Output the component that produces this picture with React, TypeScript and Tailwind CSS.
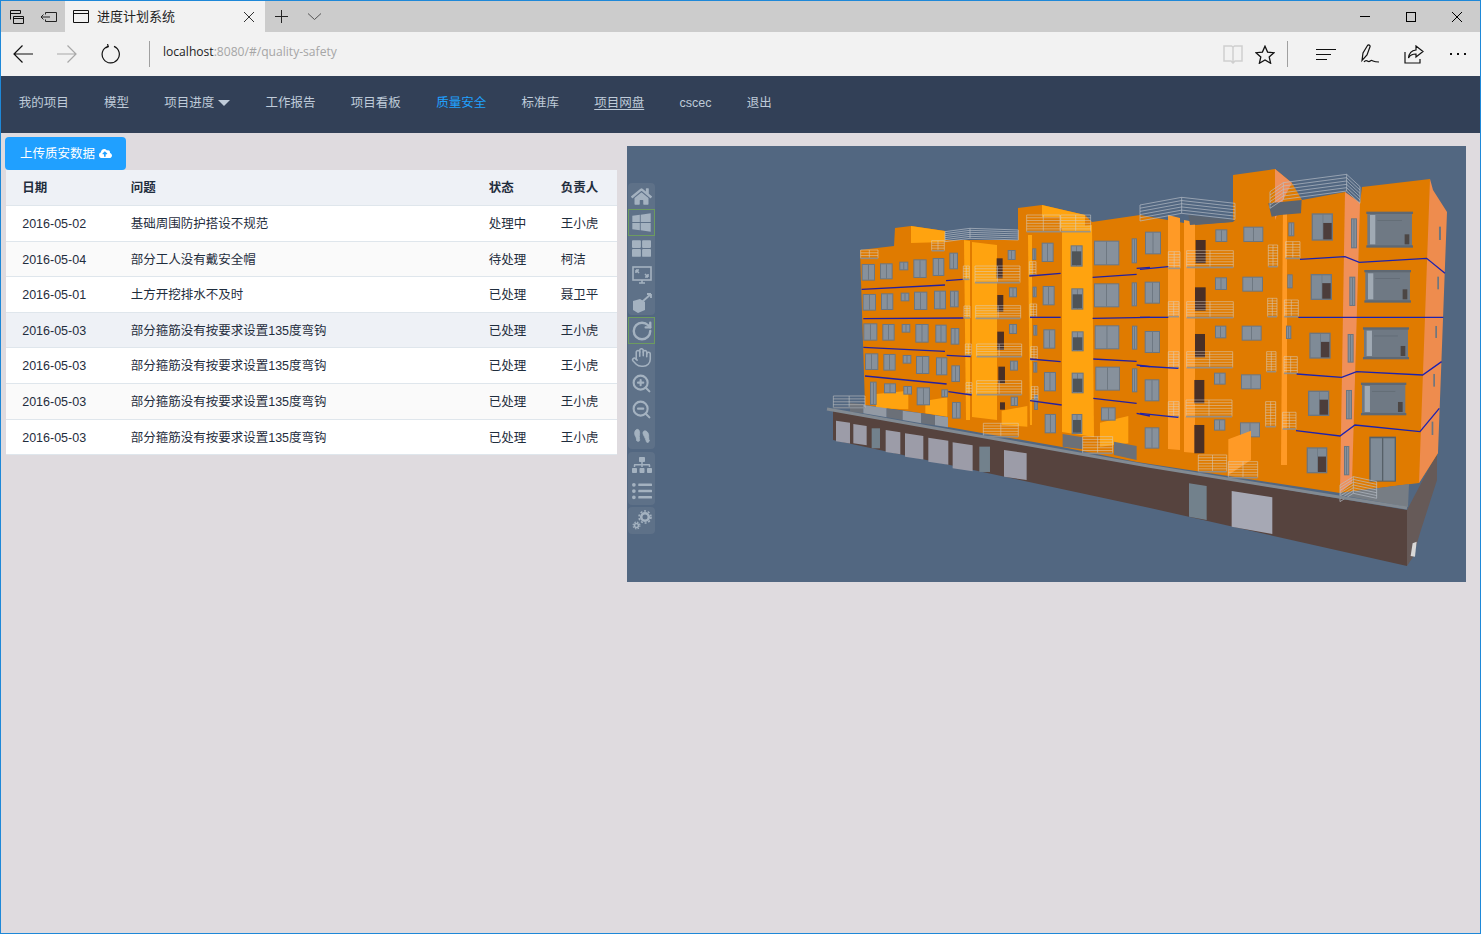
import type { ReactNode } from 'react';
import { Hand, RotateCw, ZoomIn, ZoomOut, Footprints } from 'lucide-react';
import { FaCloudUploadAlt, FaHome, FaListUl, FaSitemap, FaThLarge, FaWindows } from 'react-icons/fa';

type Box = [number, number, number, number];

const rows = [
  ['2016-05-02', '基础周围防护搭设不规范', '处理中', '王小虎', 'bg-white'],
  ['2016-05-04', '部分工人没有戴安全帽', '待处理', '柯洁', 'bg-[#fafafa]'],
  ['2016-05-01', '土方开挖排水不及时', '已处理', '聂卫平', 'bg-white'],
  ['2016-05-03', '部分箍筋没有按要求设置135度弯钩', '已处理', '王小虎', 'bg-[#eef1f6]'],
  ['2016-05-03', '部分箍筋没有按要求设置135度弯钩', '已处理', '王小虎', 'bg-white'],
  ['2016-05-03', '部分箍筋没有按要求设置135度弯钩', '已处理', '王小虎', 'bg-[#fafafa]'],
  ['2016-05-03', '部分箍筋没有按要求设置135度弯钩', '已处理', '王小虎', 'bg-white'],
];

// coordinates below are read off the two zoomed crops (3x), hence the group transforms
const leftWindows: Box[] = [
  [125, 312, 40, 50], [180, 310, 38, 48], [238, 305, 27, 26], [280, 298, 40, 56], [338, 294, 35, 54], [388, 278, 26, 50],
  [128, 402, 40, 50], [183, 400, 37, 50], [242, 398, 26, 26], [282, 395, 40, 55], [342, 392, 36, 56], [390, 392, 26, 50],
  [130, 490, 42, 52], [187, 492, 37, 50], [245, 492, 26, 26], [286, 492, 40, 56], [346, 494, 34, 54], [392, 504, 26, 50],
  [135, 580, 40, 50], [190, 582, 37, 50], [248, 585, 26, 26], [288, 588, 40, 54], [348, 592, 34, 54], [394, 616, 26, 50],
  [150, 665, 20, 70], [192, 670, 36, 30], [250, 678, 26, 26], [290, 682, 40, 54], [364, 688, 20, 24], [396, 726, 26, 50],
  [563, 270, 24, 30], [567, 382, 24, 30], [567, 492, 24, 30], [570, 602, 24, 30], [572, 710, 22, 28],
  [637, 265, 12, 35], [638, 380, 12, 32], [640, 495, 12, 32], [640, 606, 12, 32], [642, 705, 12, 45],
  [665, 248, 36, 58], [668, 378, 36, 58], [670, 508, 36, 58], [672, 636, 36, 58], [674, 762, 34, 58],
  [822, 242, 76, 74], [822, 370, 76, 72], [824, 496, 74, 72], [826, 620, 74, 72], [843, 742, 44, 40],
  [935, 235, 16, 75], [935, 367, 16, 72], [936, 497, 16, 72], [936, 625, 16, 72],
];
const leftDark: Box[] = [
  [530, 295, 18, 60], [532, 405, 18, 50], [532, 515, 20, 55], [535, 620, 20, 50], [540, 727, 15, 22],
];
const towerWindows: Box[] = [
  [752, 256, 36, 64], [754, 385, 36, 64], [755, 514, 36, 60], [755, 638, 36, 62], [755, 762, 32, 60],
];
const leftRails: Box[] = [
  [465, 318, 135, 50], [467, 437, 135, 38], [470, 552, 135, 38], [470, 662, 135, 42],
  [430, 318, 18, 40], [432, 438, 18, 36], [436, 552, 18, 34], [438, 668, 18, 34],
  [628, 305, 20, 40], [630, 432, 20, 40], [632, 560, 20, 40], [634, 680, 20, 40],
  [620, 165, 100, 50], [722, 165, 90, 50], [122, 270, 52, 25], [335, 242, 38, 30],
  [40, 708, 95, 35], [490, 790, 105, 40], [788, 830, 90, 50],
];
const leftLines = [
  '125,388 375,375', '378,362 428,358', '130,476 430,474', '130,562 375,574', '380,586 452,590', '135,648 380,672',
  '385,695 455,705', '628,348 722,340', '630,472 722,472', '630,597 722,605', '630,722 725,735', '818,352 950,343',
  '818,475 990,472', '820,597 950,604', '820,715 950,730', '950,325 990,322', '950,615 990,620', '950,760 990,768',
];
const rightWindows: Box[] = [
  [15, 215, 48, 68], [14, 365, 46, 66], [14, 513, 46, 66], [14, 658, 44, 66], [14, 802, 44, 64],
  [226, 208, 36, 38], [225, 352, 36, 38], [225, 497, 34, 38], [222, 638, 35, 36], [222, 778, 34, 34],
  [310, 200, 60, 46], [307, 350, 62, 45], [305, 497, 60, 45], [303, 643, 60, 45], [300, 787, 60, 45],
  [445, 187, 18, 42], [442, 343, 16, 42], [438, 497, 16, 40],
  [633, 175, 18, 90], [628, 350, 18, 88], [623, 522, 18, 86], [618, 690, 18, 88], [612, 858, 16, 88],
];
const rightPaned: Box[] = [
  [515, 160, 64, 82], [512, 342, 64, 78], [508, 518, 64, 78], [504, 692, 64, 76], [500, 862, 62, 78],
];
const rightLarge: Box[] = [
  [682, 155, 134, 108], [676, 330, 134, 98], [672, 502, 132, 96], [666, 668, 130, 98],
];
const rightDark: Box[] = [
  [167, 240, 30, 70], [165, 382, 32, 70], [165, 522, 30, 70], [163, 660, 30, 70], [163, 795, 30, 85],
];
const rightThin: Box[] = [
  [897, 200, 6, 40], [892, 350, 5, 38], [886, 498, 5, 36], [880, 642, 5, 38], [875, 785, 5, 40],
];
const rightRails: Box[] = [
  [140, 272, 140, 50], [140, 425, 140, 48], [140, 575, 138, 48], [138, 720, 138, 50],
  [85, 275, 35, 50], [85, 425, 32, 45], [85, 575, 32, 48], [85, 725, 32, 45],
  [437, 245, 43, 50], [433, 420, 42, 50], [432, 590, 40, 50], [428, 757, 40, 50],
  [385, 255, 28, 65], [383, 415, 28, 55], [380, 575, 28, 60], [377, 725, 30, 75],
  [175, 885, 85, 50], [265, 905, 88, 48],
];
const rightLines = [
  '0,328 85,320', '0,472 85,472', '0,618 115,625', '0,760 115,772',
  '480,298 615,290 658,307 860,295 915,340', '475,472 910,472',
  '470,642 605,652 650,635 848,645 905,605', '468,812 600,828 645,795 840,815 898,745',
];
const garageDoors: Box[] = [
  [48, 782, 42, 62], [100, 792, 40, 58], [197, 810, 44, 66], [255, 820, 55, 70],
  [325, 833, 60, 72], [398, 847, 60, 78], [552, 870, 68, 80],
];

function Win({ box }: { box: Box }) {
  const [x, y, w, h] = box;
  return (
    <g>
      <rect x={x} y={y} width={w} height={h} fill="#6c7680" />
      <rect x={x + 3} y={y + 3} width={w - 6} height={h - 6} fill="#87919c" />
      <rect x={x + w / 2 - 1} y={y + 3} width={2} height={h - 6} fill="#626c76" />
    </g>
  );
}

function Paned({ box }: { box: Box }) {
  const [x, y, w, h] = box;
  return (
    <g>
      <rect x={x} y={y} width={w} height={h} fill="#6c7680" />
      <rect x={x + 4} y={y + 4} width={w / 2 - 3} height={h - 8} fill="#7f8b97" />
      <rect x={x + w / 2 + 3} y={y + h * 0.35} width={w / 2 - 7} height={h * 0.65 - 4} fill="#4c3d3b" />
      <rect x={x + w / 2 + 3} y={y + 4} width={w / 2 - 7} height={h * 0.35 - 4} fill="#7f8b97" />
    </g>
  );
}

function Large({ box }: { box: Box }) {
  const [x, y, w, h] = box;
  return (
    <g>
      <rect x={x} y={y + 4} width={w} height={h - 8} fill="#6f7984" />
      <rect x={x - 3} y={y} width={w + 6} height={7} fill="#5f6872" />
      <rect x={x - 3} y={y + h - 7} width={w + 6} height={7} fill="#5f6872" />
      <rect x={x + 8} y={y + 10} width={16} height={h - 20} fill="#a0aab4" />
      <rect x={x + w - 22} y={y + h - 40} width={14} height={30} fill="#4c4644" />
      <rect x={x + 30} y={y + 25} width={w - 60} height={2} fill="#5f6872" />
    </g>
  );
}

function Rail({ box }: { box: Box }) {
  const [x, y, w, h] = box;
  const count = Math.max(3, Math.round(h / 8));
  return (
    <g stroke="#d5d3cf" strokeWidth="1.8" opacity="0.85">
      {Array.from({ length: count }, (_, i) => (
        <line key={i} x1={x} y1={y + (i * h) / count} x2={x + w} y2={y + (i * h) / count} />
      ))}
      <line x1={x} y1={y} x2={x} y2={y + h} />
      <line x1={x + w / 2} y1={y} x2={x + w / 2} y2={y + h} />
      <line x1={x + w} y1={y} x2={x + w} y2={y + h} />
      <line x1={x} y1={y + h} x2={x + w} y2={y + h} stroke="#8b929a" strokeWidth="5" />
    </g>
  );
}

// roof railing that follows a bent outline, drawn as stacked copies of the top edge
function RoofRail({ top, height, count = 6 }: { top: [number, number][]; height: number; count?: number }) {
  return (
    <g fill="none" stroke="#b9c0c8" strokeWidth="2">
      {Array.from({ length: count }, (_, i) => (
        <polyline key={i} points={top.map(([x, y]) => `${x},${y + (i * height) / (count - 1)}`).join(' ')} />
      ))}
      {top.map(([x, y]) => (
        <line key={x} x1={x} y1={y} x2={x} y2={y + height} />
      ))}
    </g>
  );
}

function Building() {
  return (
    <svg viewBox="627 146 839 436" className="absolute inset-0 h-full w-full blur-[0.4px]">
      {/* base */}
      <polygon points="833,411 1148,466 1407,510 1407,566 1150,508 833,440" fill="#56433e" />
      <polygon points="1407,510 1437,453 1437,480 1420,533 1413,557 1407,566" fill="#665a58" />
      {/* facade */}
      <polygon
        points="860,250 894,246 895,228 911,226 945,231 945,240 1018,240 1018,208 1042,205 1085,215 1092,222 1140,215 1195,225 1233,222 1233,175 1275,169 1292,183 1302,200 1345,192 1360,203 1362,187 1430,179 1438,453 1419,483 1340,493 1137,462 1062,447 948,427 948,417 865,405"
        fill="#e07b00"
      />
      <polygon points="1430,179 1433,190 1447,212 1438,453 1419,483" fill="#ee8c4e" />
      <polygon points="1345,192 1360,203 1352,483 1340,493" fill="#f0905a" />
      <polygon points="1275,169 1292,183 1285,196 1275,220" fill="#f0905a" />
      <polygon points="972,242 997,245 997,420 972,417" fill="#ffa30f" />
      <polygon points="964,240 970,241 970,420 966,420" fill="#ffa30f" />
      <polygon points="1062,228 1092,225 1094,437 1062,432" fill="#ffa30f" />
      <polygon points="1028,235 1032,235 1032,425 1030,425" fill="#ffa30f" />
      <polygon points="1168,215 1180,218 1180,450 1168,449" fill="#ff9a26" />
      <polygon points="1184,220 1195,222 1195,453 1184,452" fill="#ff9a26" />
      <polygon points="1283,205 1287,205 1287,465 1281,465" fill="#ff9a26" />
      <polygon points="911,226 945,231 945,242 911,243" fill="#ffa30f" />
      <polygon points="1042,205 1085,215 1085,228 1060,228 1060,217 1042,217" fill="#ffa30f" />
      <polygon points="1340,493 1409,484 1408,507 1340,495" fill="#777d84" />
      <g transform="translate(820 160) scale(0.3333)">
        <polygon points="168,702 265,692 265,748 168,745" fill="#ffa30f" />
        <polygon points="316,722 382,712 382,770 316,760" fill="#ffa30f" />
        <polygon points="545,752 622,738 622,800 545,795" fill="#ffa30f" />
        <polygon points="840,788 925,768 925,850 840,860" fill="#ffa30f" />
        <polygon points="90,728 130,732 130,760 90,755" fill="#6b7078" />
        <polygon points="130,735 200,745 200,772 130,760" fill="#939aa4" />
        <polygon points="200,745 248,752 248,780 200,772" fill="#6b7078" />
        <polygon points="248,752 304,760 304,790 248,780" fill="#939aa4" />
        <polygon points="304,760 345,766 345,796 304,790" fill="#6b7078" />
        <polygon points="345,766 384,772 384,802 345,796" fill="#939aa4" />
        <polygon points="728,822 788,832 788,868 728,860" fill="#6b7078" />
        <polygon points="882,845 950,858 950,900 882,885" fill="#6b7078" />
        {leftWindows.map((b) => <Win key={b.join()} box={b} />)}
        {towerWindows.map((b) => (
          <g key={b.join()}>
            <Win box={b} />
            <rect x={b[0] + 4} y={b[1] + 18} width={b[2] - 8} height={b[3] - 22} fill="#4f5458" />
          </g>
        ))}
        {leftDark.map((b) => <rect key={b.join()} x={b[0]} y={b[1]} width={b[2]} height={b[3]} fill="#4a2f25" />)}
        {leftRails.map((b) => <Rail key={b.join()} box={b} />)}
        <RoofRail top={[[375, 215], [450, 205], [595, 210]]} height={30} />
        {leftLines.map((p) => <polyline key={p} points={p} fill="none" stroke="#2420a0" strokeWidth="4" />)}
        {garageDoors.map(([x, y, w, h]) => (
          <polygon key={x} points={`${x},${y} ${x + w},${y + w * 0.15} ${x + w},${y + h + w * 0.15} ${x},${y + h}`} fill="#9c9ca8" />
        ))}
        <rect x={155} y={805} width={25} height={60} fill="#72818c" />
        <rect x={478} y={860} width={32} height={76} fill="#72818c" />
      </g>
      <g transform="translate(1140 160) scale(0.3333)">
        <polygon points="145,165 285,180 280,185 150,195" fill="#5b6470" />
        <polygon points="385,130 485,120 483,160 420,165 395,170" fill="#5b6470" />
        {rightWindows.map((b) => <Win key={b.join()} box={b} />)}
        {rightPaned.map((b) => <Paned key={b.join()} box={b} />)}
        {rightLarge.map((b) => <Large key={b.join()} box={b} />)}
        <rect x={688} y={830} width={80} height={135} fill="#566068" />
        <rect x={692} y={835} width={34} height={127} fill="#7f8b97" />
        <rect x={730} y={835} width={34} height={127} fill="#7f8b97" />
        {rightDark.map((b) => <rect key={b.join()} x={b[0]} y={b[1]} width={b[2]} height={b[3]} fill="#4a2f25" />)}
        {rightThin.map((b) => <rect key={b.join()} x={b[0]} y={b[1]} width={b[2]} height={b[3]} fill="#6c7680" />)}
        <polygon points="265,838 333,812 333,900 265,945" fill="#ff9a26" />
        {rightRails.map((b) => <Rail key={b.join()} box={b} />)}
        <RoofRail top={[[0, 135], [125, 112], [285, 130]]} height={48} />
        <RoofRail top={[[390, 95], [430, 68], [620, 43], [660, 80]]} height={50} />
        <RoofRail top={[[600, 975], [640, 950], [710, 965]]} height={50} count={7} />
        {rightLines.map((p) => <polyline key={p} points={p} fill="none" stroke="#1c22b0" strokeWidth="4" />)}
        <polygon points="147,970 200,978 200,1080 147,1070" fill="#72818c" />
        <polygon points="275,993 397,1012 397,1122 275,1100" fill="#a6a8b4" />
        <polygon points="818,1150 830,1145 825,1190 812,1188" fill="#d8d8d8" />
      </g>
      <polyline points="827,409 1148,466 1407,508" fill="none" stroke="#828a92" strokeWidth="3" />
    </svg>
  );
}

function ToolBtn({ children, active }: { children: ReactNode; active?: boolean }) {
  return (
    <div className={`flex h-[26.4px] items-center justify-center ${active ? 'border border-[#6d9b5f]' : ''}`}>
      {children}
    </div>
  );
}

function Toolbar() {
  const stroke = '#a4b2c0';
  return (
    <div className="absolute left-px top-[37px] flex w-[27px] flex-col gap-[2.5px] text-[#a4b2c0] blur-[0.3px]">
      <div className="rounded-sm bg-[#5e7188]">
        <ToolBtn><FaHome size={21} /></ToolBtn>
        <ToolBtn active><FaWindows size={21} /></ToolBtn>
        <ToolBtn><FaThLarge size={19} /></ToolBtn>
        <ToolBtn>
          <svg width="20" height="20" viewBox="0 0 20 20" fill="none" stroke={stroke} strokeWidth="1.6">
            <rect x="1" y="2" width="18" height="13" />
            <path d="M4 5l3 3M4 5v3M4 5h3M16 12l-3-3M16 12V9M16 12h-3M7 18h6M10 15v3" />
          </svg>
        </ToolBtn>
        <ToolBtn>
          <svg width="22" height="22" viewBox="0 0 22 22" fill={stroke}>
            <path d="M2 10l7-2 5 3v8l-7 3-5-3z" />
            <path d="M11 11l9-8M20 3l-4 0M20 3v4" fill="none" stroke={stroke} strokeWidth="1.8" />
          </svg>
        </ToolBtn>
      </div>
      <div className="rounded-sm bg-[#5e7188]">
        <ToolBtn active><RotateCw size={22} strokeWidth={2.6} /></ToolBtn>
        <ToolBtn><Hand size={21} strokeWidth={1.8} /></ToolBtn>
        <ToolBtn><ZoomIn size={21} strokeWidth={2.4} /></ToolBtn>
        <ToolBtn><ZoomOut size={21} strokeWidth={2.4} /></ToolBtn>
        <ToolBtn><Footprints size={18} fill={stroke} strokeWidth={1} className="rotate-[-12deg]" /></ToolBtn>
      </div>
      <div className="rounded-sm bg-[#5e7188]">
        <ToolBtn><FaSitemap size={20} /></ToolBtn>
        <ToolBtn><FaListUl size={20} /></ToolBtn>
      </div>
      <div className="rounded-sm bg-[#5e7188]">
        <ToolBtn>
          <svg width="20" height="20" viewBox="0 0 20 20" fill="none" stroke={stroke}>
            <circle cx="13" cy="7" r="3.800" strokeWidth="2.600" />
            <circle cx="13" cy="7" r="6" strokeWidth="1.600" strokeDasharray="2 1.800" />
            <circle cx="4.500" cy="15.500" r="2" strokeWidth="1.600" />
            <circle cx="4.500" cy="15.500" r="3.400" strokeWidth="1.200" strokeDasharray="1.400 1.300" />
          </svg>
        </ToolBtn>
      </div>
    </div>
  );
}

function TabBar() {
  return (
    <div className="flex h-[31px] bg-[#cccccc] text-black">
      <div className="flex w-8 items-center justify-center">
        <svg width="16" height="16" viewBox="0 0 16 16" fill="none" stroke="#111" strokeWidth="1">
          <path d="M1.5 10.500v-9h10M1.500 4.500h10v-3M4.500 14.500v-7h10v7zM4.500 9.500h10" />
        </svg>
      </div>
      <div className="flex w-8 items-center justify-center">
        <svg width="18" height="12" viewBox="0 0 18 12" fill="none" stroke="#222" strokeWidth="1">
          <path d="M5.500 1.500h11v9h-11M1 6h9M3.500 3.500L1 6l2.500 2.500M5.500 1.500v2M5.500 8.500v2" />
        </svg>
      </div>
      <div className="flex w-[200px] items-center bg-[#f2f2f2] pl-2">
        <svg width="16" height="13" viewBox="0 0 16 13" fill="none" stroke="#111" strokeWidth="1">
          <path d="M.5.500h15v12H.5zM.5 3.500h15" />
        </svg>
        <span className="ml-2 text-[13px] text-[#222]">进度计划系统</span>
        <svg className="ml-auto mr-[11px]" width="10" height="10" viewBox="0 0 10 10" stroke="#333" strokeWidth="1">
          <path d="M0 0l10 10M10 0L0 10" />
        </svg>
      </div>
      <div className="flex w-[33px] items-center justify-center">
        <svg width="13" height="13" viewBox="0 0 13 13" stroke="#222" strokeWidth="1">
          <path d="M6.500 0v13M0 6.500h13" />
        </svg>
      </div>
      <div className="flex w-[32px] items-center justify-center">
        <svg width="13" height="7" viewBox="0 0 13 7" fill="none" stroke="#555" strokeWidth="1">
          <path d="M0 .5l6.500 6 6.500-6" />
        </svg>
      </div>
      <div className="ml-auto flex">
        <div className="flex w-[46px] items-center justify-center">
          <div className="h-px w-[10px] bg-black" />
        </div>
        <div className="flex w-[46px] items-center justify-center">
          <div className="h-[10px] w-[10px] border border-black" />
        </div>
        <div className="flex w-[46px] items-center justify-center">
          <svg width="10" height="10" viewBox="0 0 10 10" stroke="#000" strokeWidth="1">
            <path d="M0 0l10 10M10 0L0 10" />
          </svg>
        </div>
      </div>
    </div>
  );
}

function AddressBar() {
  return (
    <div className="flex h-11 items-center bg-[#f2f2f2]">
      <div className="flex w-[44px] justify-center">
        <svg width="20" height="18" viewBox="0 0 20 18" fill="none" stroke="#111" strokeWidth="1.2">
          <path d="M20 9H1M9.500.5L1 9l8.500 8.500" />
        </svg>
      </div>
      <div className="flex w-[44px] justify-center">
        <svg width="20" height="18" viewBox="0 0 20 18" fill="none" stroke="#a8a8a8" strokeWidth="1.2">
          <path d="M0 9h19M10.500.5L19 9l-8.500 8.500" />
        </svg>
      </div>
      <div className="flex w-[44px] justify-center">
        <svg width="20" height="20" viewBox="0 0 20 20" fill="none" stroke="#111" strokeWidth="1.2">
          <path d="M7 2.200A8.600 8.600 0 1 0 13 2.400M6.500 0l.8 2.600L4.500 4" />
        </svg>
      </div>
      <div className="ml-4 h-[26px] w-px bg-[#a0a0a0]" />
      <div className="ml-[13px] -translate-y-[2px] font-['Open_Sans',sans-serif] text-[12.1px] text-[#a6a6a6]">
        <span className="text-[#222]">localhost</span>:8080/#/quality-safety
      </div>
      <div className="ml-auto flex items-center">
        <div className="flex w-[32px] justify-center">
          <svg width="20" height="19" viewBox="0 0 20 19" fill="none" stroke="#cfcfcf" strokeWidth="1.5">
            <path d="M1 1h7.500l1.500 1 1.500-1H19v15h-7l-2 2-2-2H1zM10 2v15" />
          </svg>
        </div>
        <div className="flex w-[32px] justify-center">
          <svg width="20" height="19" viewBox="0 0 20 19" fill="none" stroke="#111" strokeWidth="1.3">
            <path d="M10 1.200l2.600 5.900 6.400.6-4.800 4.200 1.400 6.300-5.600-3.300-5.600 3.300 1.400-6.300L1 7.700l6.400-.6z" />
          </svg>
        </div>
        <div className="ml-[6px] h-[26px] w-px bg-[#a0a0a0]" />
        <div className="ml-[16px] flex w-[44px] justify-center">
          <svg width="20" height="11" viewBox="0 0 20 11" stroke="#111" strokeWidth="1">
            <path d="M0 .5h20M0 5.500h15M0 10.500h11" />
          </svg>
        </div>
        <div className="flex w-[44px] justify-center">
          <svg width="18" height="20" viewBox="0 0 18 20" fill="none" stroke="#111" strokeWidth="1.2">
            <path d="M1 16.500L2 9l4.500-7.500c1-1.200 3-.2 2.500 1.200L6 11l-5 5.500zM3 18c2-3 3-1 4.500-.5s2-1.500 3.500-1 2 1.500 7 1.500" />
          </svg>
        </div>
        <div className="flex w-[44px] justify-center">
          <svg width="20" height="19" viewBox="0 0 20 19" fill="none" stroke="#111" strokeWidth="1.2">
            <path d="M1 7v11h15v-4M12 1l7 5.500-7 5.500V9c-4 0-6 1-7.500 4 .5-5 3-7.500 7.500-8z" />
          </svg>
        </div>
        <div className="flex w-[44px] justify-center gap-[5px]">
          <div className="h-[2px] w-[2px] bg-[#111]" />
          <div className="h-[2px] w-[2px] bg-[#111]" />
          <div className="h-[2px] w-[2px] bg-[#111]" />
        </div>
      </div>
    </div>
  );
}

function NavBar() {
  const item = 'px-[17.65px]';
  return (
    <div className="flex h-[57px] items-center bg-[#324057] pb-[2px] text-[12.5px] text-[#bfcbd9]">
      <span className={item}>我的项目</span>
      <span className={item}>模型</span>
      <span className={`${item} flex items-center gap-1`}>
        项目进度
        <span className="mb-[2px] h-0 w-0 border-x-[6px] border-t-[6px] border-x-transparent border-t-[#bfcbd9]" />
      </span>
      <span className={item}>工作报告</span>
      <span className={item}>项目看板</span>
      <span className={`${item} text-[#20a0ff]`}>质量安全</span>
      <span className={item}>标准库</span>
      <span className={item}><span className="underline underline-offset-2">项目网盘</span></span>
      <span className={item}>cscec</span>
      <span className={item}>退出</span>
    </div>
  );
}

function IssueTable() {
  const cols = ['w-[108.500px]', 'w-[358px]', 'w-[72px]', 'w-[72.500px]'];
  return (
    <div className="ml-px w-[611px] text-[12.5px] text-[#1f2d3d]">
      <div className="flex h-[36.100px] items-center border-b border-[#dfe6ec] bg-[#eef1f6] pt-[2px] font-bold">
        {['日期', '问题', '状态', '负责人'].map((h, i) => (
          <div key={h} className={`${cols[i]} pl-[16.200px]`}>{h}</div>
        ))}
      </div>
      {rows.map((r, i) => (
        <div key={i} className={`flex h-[35.600px] items-center border-b border-[#dfe6ec] pt-[2px] ${r[4]}`}>
          {r.slice(0, 4).map((c, j) => (
            <div key={j} className={`${cols[j]} pl-[16.200px]`}>{c}</div>
          ))}
        </div>
      ))}
    </div>
  );
}

export default function App() {
  return (
    <div className="h-[934px] w-[1481px] overflow-hidden border border-[#1e88d8] bg-[#dfdbdf] font-['Liberation_Sans','Noto_Sans_CJK_SC',sans-serif]">
      <TabBar />
      <AddressBar />
      <NavBar />
      <div className="flex">
        <div className="ml-1 w-[613px] pt-1">
          <button className="flex h-[33px] w-[121px] items-center gap-1 rounded-[4px] bg-[#20a0ff] pl-[15px] pt-[2px] text-[12.5px] text-white">
            上传质安数据
            <FaCloudUploadAlt size={13} className="-translate-y-px" />
          </button>
          <IssueTable />
        </div>
        <div className="relative ml-[9px] mt-[13px] h-[436px] w-[839px] bg-[#526781]">
          <Building />
          <Toolbar />
        </div>
      </div>
    </div>
  );
}
